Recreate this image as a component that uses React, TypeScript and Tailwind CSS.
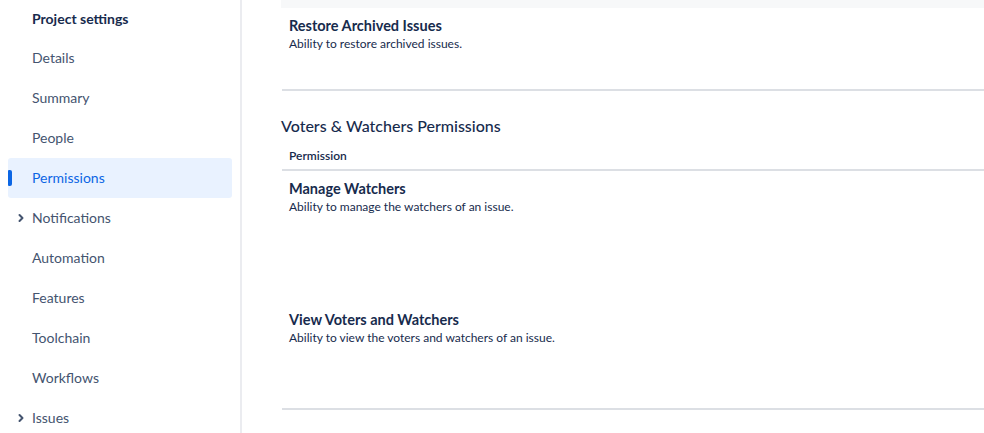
import { ChevronRight } from "lucide-react";

type NavItem = { label: string; expandable?: boolean; active?: boolean };

const navItems: NavItem[] = [
  { label: "Details" },
  { label: "Summary" },
  { label: "People" },
  { label: "Permissions", active: true },
  { label: "Notifications", expandable: true },
  { label: "Automation" },
  { label: "Features" },
  { label: "Toolchain" },
  { label: "Workflows" },
  { label: "Issues", expandable: true },
];

function Sidebar() {
  return (
    <nav className="w-[242px] shrink-0 border-r-2 border-[#ebecf0] px-2 h-[433px] overflow-hidden">
      <div className="-mt-[2px] h-10 flex items-center pl-6 text-[14px] font-bold text-[#172b4d]">
        Project settings
      </div>
      {navItems.map((item) => (
        <div
          key={item.label}
          className={
            item.active
              ? "relative h-10 flex items-center pl-6 pb-px rounded-[3px] bg-[#e9f2ff] text-[14px] text-[#0c66e4]"
              : "relative h-10 flex items-center pl-6 pb-px text-[14px] text-[#44546f]"
          }
        >
          {item.active && (
            <span className="absolute left-0 top-3 h-4 w-1 rounded-r-[2px] rounded-l-[1px] bg-[#0c66e4]" />
          )}
          {item.expandable && (
            <ChevronRight className="absolute left-[7px] top-[14px] size-3 text-[#44546f]" strokeWidth={4} />
          )}
          {item.label}
        </div>
      ))}
    </nav>
  );
}

function PermissionRow({ title, desc, height }: { title: string; desc: string; height: string }) {
  return (
    <div className={`${height} pl-[7px] pr-2 pt-2`}>
      <div className="text-[14.5px] leading-5 font-bold text-[#172b4d]">{title}</div>
      <div className="text-[12px] leading-4 text-[#172b4d]">{desc}</div>
    </div>
  );
}

export default function App() {
  return (
    <div
      className="flex w-[984px] h-[433px] overflow-hidden bg-white"
      style={{ fontFamily: '"Segoe UI", Lato, "Open Sans", sans-serif' }}
    >
      <Sidebar />
      <main className="flex-1 pl-[40px] min-w-0">
        <div className="h-2 bg-[#f7f8f9] -ml-px" />
        <div className="border-b-2 border-[#dcdfe4]">
          <PermissionRow
            title="Restore Archived Issues"
            desc="Ability to restore archived issues."
            height="h-[81px]"
          />
        </div>

        <h2 className="mt-[25px] -ml-px text-[16px] leading-5 font-medium text-[#172b4d]">
          Voters &amp; Watchers Permissions
        </h2>
        <div className="mt-3 border-b-2 border-[#dcdfe4] pl-[7px] pr-2 pb-[5px] text-[12px] leading-4 font-semibold text-[#172b4d]">
          Permission
        </div>

        <div className="border-b-2 border-[#dcdfe4]">
          <PermissionRow
            title="Manage Watchers"
            desc="Ability to manage the watchers of an issue."
            height="h-[131px]"
          />
          <PermissionRow
            title="View Voters and Watchers"
            desc="Ability to view the voters and watchers of an issue."
            height="h-[106px]"
          />
        </div>
      </main>
    </div>
  );
}
